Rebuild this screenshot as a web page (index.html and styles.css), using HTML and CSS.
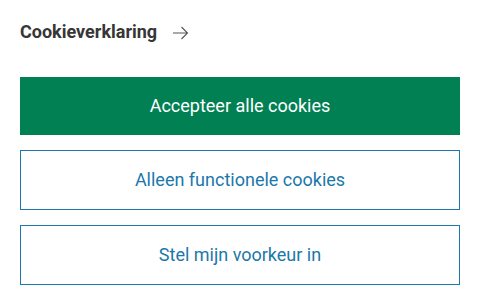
FILE: index.html
```html
<!DOCTYPE html>
<html lang="nl">
<head>
    <meta charset="UTF-8">
    <meta name="viewport" content="width=device-width, initial-scale=1.0">
    <title>Cookies</title>
    <link rel="stylesheet" href="styles.css">
</head>
<body>
    <div class="cookie-panel">
        <a class="statement-link" href="#">
            Cookieverklaring
            <svg class="arrow" width="17" height="14" viewBox="0 0 17 14" fill="none" stroke="#555" stroke-width="1.1">
                <path d="M1 7h14.5M9.5 1l6 6-6 6"/>
            </svg>
        </a>

        <div class="buttons">
            <button class="btn btn-primary">Accepteer alle cookies</button>
            <button class="btn btn-outline">Alleen functionele cookies</button>
            <button class="btn btn-outline">Stel mijn voorkeur in</button>
        </div>
    </div>
</body>
</html>
```

FILE: styles.css
```css
* {
    box-sizing: border-box;
    margin: 0;
    padding: 0;
}

body {
    background-color: white;
    font-family: Roboto, "Liberation Sans", Arial, sans-serif;
    padding: 20px;
}

.statement-link {
    display: flex;
    align-items: center;
    gap: 15px;
    font-size: 18px;
    line-height: 24px;
    font-weight: 700;
    color: #363636;
    text-decoration: none;
}

.arrow {
    margin-top: 1px;
}

.buttons {
    display: flex;
    flex-direction: column;
    gap: 15px;
    margin-top: 33px;
}

.btn {
    width: 100%;
    font-family: inherit;
    font-size: 18px;
    line-height: 20px;
    cursor: pointer;
}

.btn-primary {
    height: 58px;
    background-color: #008053;
    color: white;
    border: none;
}

.btn-outline {
    height: 60px;
    background-color: white;
    color: #1b78aa;
    border: 1px solid #1b78aa;
}
```
